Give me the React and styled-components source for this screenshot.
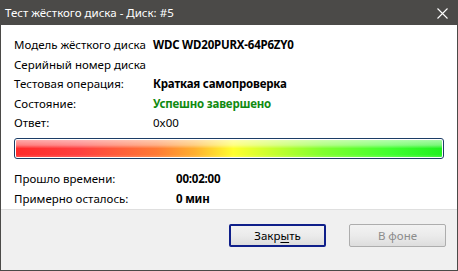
import React from 'react';
import styled, { createGlobalStyle } from 'styled-components';

const GlobalStyle = createGlobalStyle`
  html, body {
    margin: 0;
    padding: 0;
    background: #ffffff;
  }
  body {
    font-family: "Noto Sans", "Open Sans", sans-serif;
    font-size: 11.5px;
  }
`

const Window = styled.div`
  width: 458px;
  height: 271px;
  box-sizing: border-box;
  border: 1px solid #4b4a48;
  border-top: none;
  display: flex;
  flex-direction: column;
  background: #ffffff;
  color: #000000;
`

const TitleBar = styled.div`
  height: 25px;
  background: #4b4a48;
  margin: 0 -1px;
  display: flex;
  align-items: center;
  justify-content: space-between;
  padding: 0 10px 0 5px;
  color: #ffffff;
  font-size: 11.5px;
`

const Title = styled.span`
  line-height: 25px;
`

const CloseIcon = styled.svg`
  width: 11px;
  height: 11px;
  margin-top: 1px;
`

const Body = styled.div`
  flex: 1;
  padding: 10px 12px 0 12px;
  display: flex;
  flex-direction: column;
`

const InfoGrid = styled.div`
  display: grid;
  grid-template-columns: ${p => p.$labelWidth}px 1fr;
  grid-auto-rows: ${p => p.$rowHeight}px;
  align-items: center;
  white-space: nowrap;
`

const Label = styled.span`
  padding-left: 1px;
`

const Value = styled.span`
  font-weight: ${p => (p.$bold ? 700 : 400)};
  color: ${p => p.$color || '#000000'};
  letter-spacing: ${p => (p.$bold ? '-0.2px' : '0')};
`

const Progress = styled.div`
  margin: 5px 1px 10px 1px;
  height: 21px;
  box-sizing: border-box;
  border: 1px solid #1c3d66;
  border-radius: 3px;
  padding: 1px;
  background: #ffffff;
`

const ProgressFill = styled.div`
  height: 100%;
  border-radius: 1px;
  background:
    linear-gradient(180deg, rgba(255,255,255,0.6) 0%, rgba(255,255,255,0.4) 30%, rgba(255,255,255,0) 50%, rgba(255,255,255,0) 85%, rgba(255,255,255,0.15) 100%),
    linear-gradient(90deg, #ff2a2a 0%, #ff4040 15%, #ff7a35 33%, #ffb030 42%, #ffff30 51%, #c8ff30 60%, #80ff30 72%, #40ff30 88%, #20f020 100%);
`

const Footer = styled.div`
  height: 49px;
  background: #f0f0f0;
  border-top: 1px solid #dfdfdf;
  display: flex;
  justify-content: flex-end;
  align-items: flex-start;
  gap: 23px;
  padding: 14px 11px 0 0;
`

const Button = styled.button`
  width: 97px;
  height: 23px;
  box-sizing: border-box;
  font-family: inherit;
  font-size: 11.5px;
  padding: 0;
  border-radius: 2px;
  border: ${p => (p.$primary ? '2px solid #0f1f8a' : '1px solid #adadad')};
  background: linear-gradient(180deg, #f2f2f2 0%, #ebebeb 50%, #dddddd 100%);
  color: ${p => (p.disabled ? '#8c8c8c' : '#000000')};
  cursor: default;
  u {
    text-decoration-thickness: 1px;
    text-underline-offset: 2px;
  }
`

const diskRows = [
  { label: 'Модель жёсткого диска', value: 'WDC WD20PURX-64P6ZY0', bold: true },
  { label: 'Серийный номер диска', value: '' },
  { label: 'Тестовая операция:', value: 'Краткая самопроверка', bold: true },
  { label: 'Состояние:', value: 'Успешно завершено', bold: true, color: '#108a10' },
  { label: 'Ответ:', value: '0x00' },
]

const timeRows = [
  { label: 'Прошло времени:', value: '00:02:00', bold: true },
  { label: 'Примерно осталось:', value: '0 мин', bold: true },
]

export default function App() {
  return (
    <>
      <GlobalStyle />
      <Window>
        <TitleBar>
          <Title>Тест жёсткого диска - Диск: #5</Title>
          <CloseIcon viewBox="0 0 11 11">
            <path d="M0.5 0.5 L10.5 10.5 M10.5 0.5 L0.5 10.5" stroke="#ffffff" strokeWidth="1.1" fill="none" />
          </CloseIcon>
        </TitleBar>
        <Body>
          <InfoGrid $labelWidth={140} $rowHeight={19.5}>
            {diskRows.map(r => (
              <React.Fragment key={r.label}>
                <Label>{r.label}</Label>
                <Value $bold={r.bold} $color={r.color}>{r.value}</Value>
              </React.Fragment>
            ))}
          </InfoGrid>
          <Progress>
            <ProgressFill />
          </Progress>
          <InfoGrid $labelWidth={163} $rowHeight={20}>
            {timeRows.map(r => (
              <React.Fragment key={r.label}>
                <Label>{r.label}</Label>
                <Value $bold={r.bold}>{r.value}</Value>
              </React.Fragment>
            ))}
          </InfoGrid>
        </Body>
        <Footer>
          <Button $primary>Закр<u>ы</u>ть</Button>
          <Button disabled>В фоне</Button>
        </Footer>
      </Window>
    </>
  );
}
